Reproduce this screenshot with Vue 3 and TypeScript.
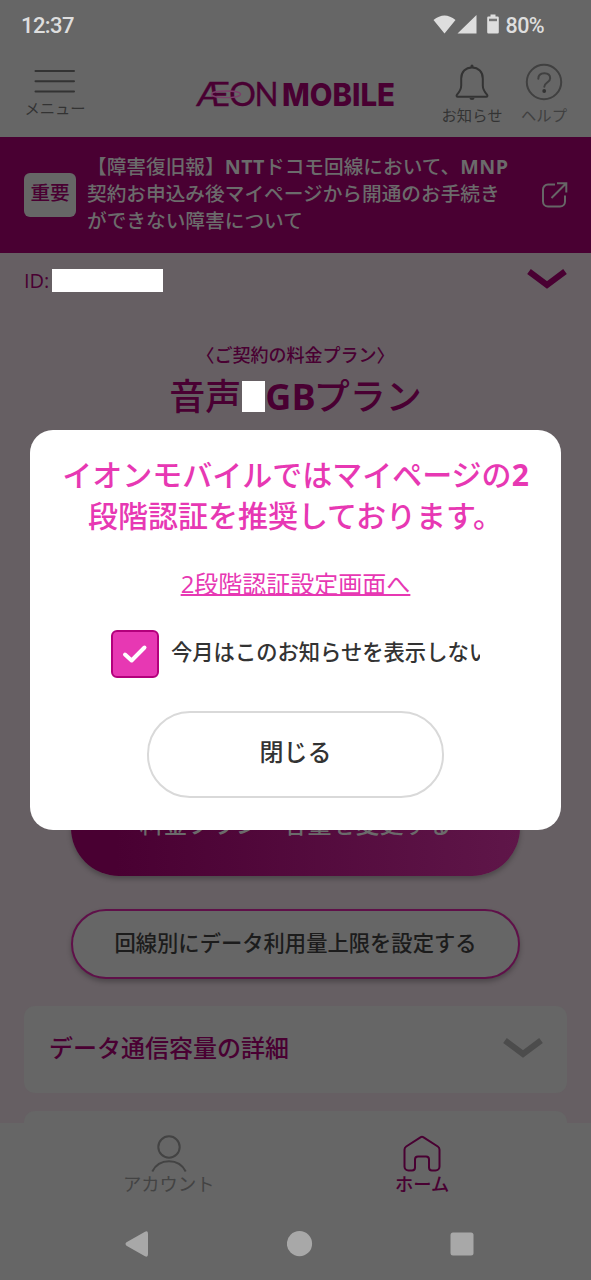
<script setup lang="ts">
const noticeLines: string[][] = [
  ['【障害復旧報】', 'NTT', 'ドコモ回線において、', 'MNP'],
  ['契約お申込み後マイページから開通のお手続き'],
  ['ができない障害について'],
]
const isLatin = (part: string): boolean => /^[A-Z]+$/.test(part)
</script>

<template>
  <div class="screen">
    <div class="status">
      <span class="clock">12:37</span>
      <svg class="status-icons" width="68" height="22" viewBox="0 0 68 22">
        <path d="M0.5 6 Q11.5 -3.2 22.5 6 L11.5 19.5Z M43.5 1 V19.500 H24.500Z" />
        <path d="M57.500 0.500h5v2h2.100a1.200 1.200 0 0 1 1.200 1.200v14.600a1.200 1.200 0 0 1-1.200 1.200h-9.200a1.200 1.200 0 0 1-1.200-1.200v-14.600a1.200 1.200 0 0 1 1.200-1.200h2.100z" />
        <path class="gap" d="M56 4.700h8v2.500h-8z" />
      </svg>
      <span class="battery">80%</span>
    </div>

    <header class="header">
      <div class="tool menu">
        <svg width="42" height="26" viewBox="0 0 42 26"><path d="M1.500 3h38.500M1.500 13.300h38.500M1.500 23.500h38.500" /></svg>
        <span>メニュー</span>
      </div>
      <svg class="logo" width="202" height="50" viewBox="0 0 202 50">
        <text class="aeon" x="1" y="36" textLength="34" lengthAdjust="spacingAndGlyphs">Æ</text>
        <text class="aeon" x="34" y="36" textLength="27" lengthAdjust="spacingAndGlyphs">O</text>
        <text class="aeon" x="59.500" y="36" textLength="24" lengthAdjust="spacingAndGlyphs">N</text>
        <ellipse cx="31" cy="24.300" rx="14.500" ry="3.300" />
        <text class="mobile" x="87" y="36" textLength="113" lengthAdjust="spacingAndGlyphs">MOBILE</text>
      </svg>
      <div class="tool bell">
        <svg width="36" height="38" viewBox="0 0 36 38">
          <path d="M18 3.500c-6.500 0-10.800 4.500-10.800 11v7c0 4-1.600 6.200-4.200 9.200-.8 1-.4 2 .8 2h28.400c1.200 0 1.600-1 .8-2-2.600-3-4.200-5.200-4.200-9.200v-7c0-6.500-4.300-11-10.800-11z" />
          <path class="solid" d="M18 0.500a1.500 1.500 0 0 1 1.500 1.500v2h-3v-2a1.500 1.500 0 0 1 1.500-1.500z M15.500 34h5a2.500 2 0 0 1-5 0z" />
        </svg>
        <span>お知らせ</span>
      </div>
      <div class="tool help">
        <svg width="38" height="38" viewBox="0 0 38 38">
          <circle cx="19" cy="19" r="17.200" />
          <path d="M13.300 15.800c0-3.600 2.500-5.600 6-5.600s5.900 1.900 5.900 5c0 4.300-5.900 4.400-5.900 8.500" />
          <circle class="solid" cx="19.200" cy="28" r="1.900" />
        </svg>
        <span>ヘルプ</span>
      </div>
    </header>

    <section class="notice">
      <span class="tag">重要</span>
      <div class="notice-text">
        <div v-for="(line, i) in noticeLines" :key="i">
          <span v-for="part in line" :key="part" :class="{ latin: isLatin(part) }">{{ part }}</span>
        </div>
      </div>
      <svg width="26" height="26" viewBox="0 0 26 26">
        <path d="M13 2.500H6a5 5 0 0 0-5 5V19.500a5 5 0 0 0 5 5H18a5 5 0 0 0 5-5V13.500M15 1.200h9.300v9.300M24 1.500L9.500 16" />
      </svg>
    </section>

    <main class="main">
      <div class="id-row">
        <span>ID:</span><i class="mask"></i>
        <svg width="40" height="22" viewBox="0 0 40 22"><path d="M2 2.500L20 16 38 2.500" /></svg>
      </div>
      <p class="caption">〈ご契約の料金プラン〉</p>
      <h1 class="plan"><span>音声</span><i class="mask"></i><b>GB</b><span>プラン</span></h1>
      <div class="spacer"></div>
      <button class="primary">料金プラン・容量を変更する</button>
      <button class="secondary">回線別にデータ利用量上限を設定する</button>
      <div class="card">
        <span>データ通信容量の詳細</span>
        <svg width="40" height="22" viewBox="0 0 40 22"><path d="M2 4.500L20 18 38 4.500" /></svg>
      </div>
      <div class="card next"></div>
    </main>

    <nav class="tabs">
      <div class="tab">
        <svg width="36" height="38" viewBox="0 0 36 38">
          <circle cx="18" cy="12" r="10.700" /><path d="M1.300 36.500C8 22.800 28 22.800 34.700 36.500" />
        </svg>
        <span>アカウント</span>
      </div>
      <div class="tab active">
        <svg width="38" height="38" viewBox="0 0 38 38">
          <path d="M17.800 2.200a2.200 2.200 0 0 1 2.400 0L34.800 11.500a3.800 3.800 0 0 1 1.700 3.200V31.500a4 4 0 0 1-4 4H29a3 3 0 0 1-3-3V24.500a3 3 0 0 0-3-3H15a3 3 0 0 0-3 3v8a3 3 0 0 1-3 3H5.500a4 4 0 0 1-4-4V14.700a3.800 3.800 0 0 1 1.700-3.200Z" />
        </svg>
        <span>ホーム</span>
      </div>
    </nav>
    <div class="system">
      <svg width="24" height="26" viewBox="0 0 24 26"><path d="M1.500 11.300L20 .7q3-1.300 3 2v20.600q0 3.300-3 2L1.500 14.700q-2-1.700 0-3.400z" /></svg>
      <svg width="26" height="26" viewBox="0 0 26 26"><circle cx="12.500" cy="12.700" r="12.600" /></svg>
      <svg width="24" height="24" viewBox="0 0 24 24"><rect x=".5" y=".5" width="23" height="23" rx="2.500" /></svg>
    </div>

    <div class="modal">
      <h2>イオンモバイルではマイページの<b>2</b><br />段階認証を推奨しております。</h2>
      <a class="link">2段階認証設定画面へ</a>
      <div class="check-row">
        <span class="checkbox">
          <svg width="26" height="20" viewBox="0 0 26 20"><path d="M3 10.500L9.600 16.500 22.500 3.500" /></svg>
        </span>
        <span class="check-label">今月はこのお知らせを表示しない</span>
      </div>
      <button class="close">閉じる</button>
    </div>
  </div>
</template>

<style>
body {
  margin: 0;
  background: #666;
}
</style>

<style scoped>
.screen {
  position: relative;
  width: 591px;
  height: 1280px;
  overflow: hidden;
  display: flex;
  flex-direction: column;
  background: #666;
  font-family: "Open Sans", "Noto Sans CJK JP", sans-serif;
  font-weight: 500;
  color: #1c1c1c;
}
svg {
  display: block;
  flex: none;
  fill: none;
}
.status {
  box-sizing: border-box;
  height: 50px;
  padding: 1px 47px 0 21px;
  display: flex;
  align-items: center;
  font: 500 22px Roboto, sans-serif;
  color: #dedede;
}
.clock {
  letter-spacing: -0.600px;
}
.status-icons {
  margin: -1px 5px 0 auto;
  fill: #dedede;
}
.status-icons .gap {
  fill: #777;
}
.battery {
  font-size: 21.500px;
  letter-spacing: -0.600px;
}
.header {
  height: 87px;
  display: flex;
  align-items: flex-start;
}
.tool {
  display: flex;
  flex-direction: column;
  align-items: center;
  font-size: 15.300px;
  font-weight: 400;
  line-height: 20px;
  white-space: nowrap;
  color: #333;
}
.tool svg {
  stroke: #333;
  stroke-width: 2;
  stroke-linecap: round;
}
.tool .solid {
  fill: #333;
  stroke: none;
}
.menu {
  width: 62px;
  margin: 18px 0 0 24px;
}
.menu span {
  margin-top: 4px;
}
.logo {
  margin: 20px 0 0 109px;
  overflow: visible;
}
.logo text {
  fill: #490032;
}
.logo .aeon {
  font: 400 32px Lato, sans-serif;
  stroke: #490032;
  stroke-width: 0.300;
}
.mobile {
  font: 800 31.500px Inter, sans-serif;
}
.logo ellipse {
  stroke: #7b3d69;
  stroke-width: 1.300;
}
.bell {
  width: 62px;
  margin: 14px 0 0 44px;
}
.help {
  width: 50px;
  margin: 13px 0 0 16px;
}
.bell span {
  margin-top: 3px;
}
.help span {
  margin-top: 4px;
}
.help {
  color: #404040;
}
.help svg {
  stroke: #404040;
}
.notice {
  box-sizing: border-box;
  height: 116px;
  padding: 0 23px 0 24px;
  display: flex;
  align-items: center;
  background: #490032;
  color: #6b6b6b;
}
.tag {
  width: 52px;
  height: 44px;
  margin: 0 11px 0 0;
  border-radius: 6px;
  background: #666;
  color: #490032;
  text-align: center;
  font-size: 19.600px;
  line-height: 40px;
}
.notice-text {
  flex: 1;
  padding-bottom: 4px;
  font-size: 19.680px;
  line-height: 27px;
  white-space: nowrap;
}
.latin {
  font-weight: 700;
  letter-spacing: 0.500px;
}
.notice svg {
  stroke: #666;
  stroke-width: 2;
}
.main {
  height: 870px;
  overflow: hidden;
  display: flex;
  flex-direction: column;
  align-items: center;
  background: #665f63;
}
.id-row {
  box-sizing: border-box;
  flex: none;
  width: 100%;
  height: 56px;
  padding: 0 24px 2px;
  display: flex;
  align-items: center;
  font-size: 20px;
  font-weight: 400;
  color: #490032;
}
.mask {
  background: #fff;
}
.id-row .mask {
  width: 111px;
  height: 23px;
  margin-left: 3px;
}
.id-row svg {
  margin-left: auto;
  stroke: #490032;
  stroke-width: 6;
}
.caption {
  flex: none;
  margin: 33px 0 0;
  font-size: 18px;
  line-height: 26px;
  color: #490032;
}
.plan {
  flex: none;
  height: 50px;
  margin: 4px 0 0;
  display: flex;
  align-items: center;
  font-size: 36px;
  font-weight: 500;
  line-height: 50px;
  color: #490032;
}
.plan .mask {
  width: 23px;
  height: 31px;
  margin: 0 0 2px 1px;
}
.plan b {
  margin-right: -2px;
}
.spacer {
  height: 349px;
  flex: none;
}
button {
  box-sizing: border-box;
  flex: none;
  padding: 0;
  font-family: inherit;
  font-weight: 500;
}
.primary {
  width: 449px;
  height: 105px;
  padding-bottom: 2px;
  border: 0;
  border-radius: 48px;
  background: linear-gradient(90deg, #490032 10%, #5f1649);
  color: #6b6b6b;
  font-size: 24px;
  box-shadow: 0 3px 5px rgba(0, 0, 0, 0.25);
}
.secondary {
  width: 449px;
  height: 70px;
  margin-top: 33px;
  padding-bottom: 6px;
  border: 2px solid #5f1049;
  border-radius: 36px;
  background: #666;
  color: #1c1c1c;
  font-size: 21.300px;
  box-shadow: 0 3px 5px rgba(0, 0, 0, 0.25);
}
.card {
  box-sizing: border-box;
  flex: none;
  width: 543px;
  height: 87px;
  margin-top: 27px;
  padding: 0 24px 6px 25px;
  display: flex;
  align-items: center;
  justify-content: space-between;
  border-radius: 11px;
  background: #666;
  color: #490032;
  font-size: 24px;
}
.card svg {
  stroke: #4c4c4c;
  stroke-width: 6;
}
.next {
  margin-top: 18px;
}
.tabs {
  box-sizing: border-box;
  height: 85px;
  padding: 12px 42px 0;
  display: flex;
}
.tab {
  flex: 1;
  display: flex;
  flex-direction: column;
  align-items: center;
  font-size: 18.300px;
  font-weight: 400;
  line-height: 22px;
  color: #434343;
}
.tab svg {
  stroke: #434343;
  stroke-width: 2;
}
.active {
  color: #490032;
  font-weight: 500;
}
.active svg {
  stroke: #490032;
}
.system {
  height: 72px;
  padding: 0 117px 0 125px;
  display: flex;
  align-items: center;
  justify-content: space-between;
}
.system svg {
  fill: #a8a8a8;
}
.modal {
  position: absolute;
  left: 30px;
  top: 430px;
  width: 531px;
  height: 400px;
  box-sizing: border-box;
  padding-top: 24px;
  display: flex;
  flex-direction: column;
  align-items: center;
  border-radius: 23px;
  background: #fff;
  color: #333;
}
h2 {
  margin: 0;
  font-size: 30px;
  font-weight: 500;
  line-height: 41px;
  text-align: center;
  white-space: nowrap;
  color: #e738b3;
}
.link {
  margin-top: 30px;
  font-size: 24px;
  font-weight: 400;
  line-height: 36px;
  color: #e738b3;
  text-decoration: underline;
  text-decoration-thickness: 1.500px;
}
.check-row {
  margin-top: 28px;
  display: flex;
  align-items: center;
}
.checkbox {
  box-sizing: border-box;
  width: 48px;
  height: 48px;
  display: flex;
  align-items: center;
  justify-content: center;
  border: 2px solid #b3007c;
  border-radius: 6px;
  background: #e738b3;
}
.checkbox svg {
  stroke: #fff;
  stroke-width: 4;
  stroke-linecap: round;
  stroke-linejoin: round;
}
.check-label {
  width: 309px;
  margin: -8px 0 0 12px;
  overflow: hidden;
  white-space: nowrap;
  font-size: 21.300px;
}
.close {
  width: 297px;
  height: 87px;
  margin-top: 33px;
  padding-bottom: 8px;
  border: 2px solid #d9d9d9;
  border-radius: 43px;
  background: #fff;
  color: #333;
  font-size: 24px;
}
</style>
